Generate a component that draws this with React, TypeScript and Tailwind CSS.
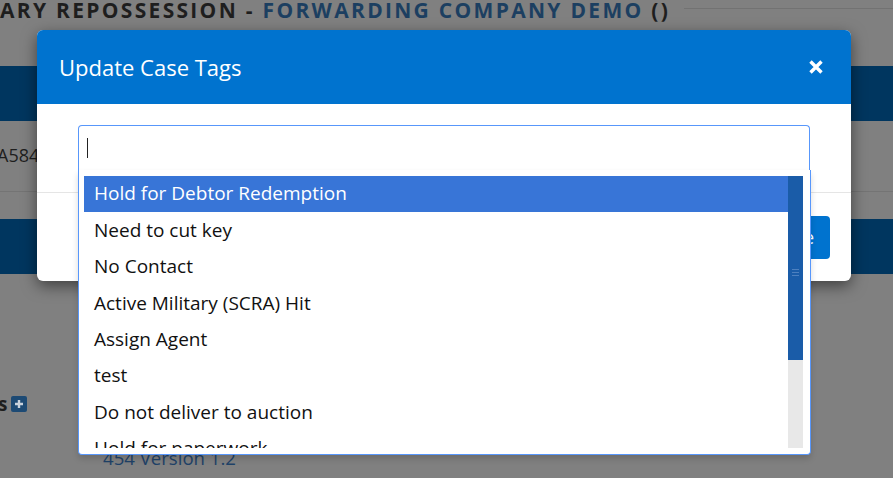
import React from "react";

const items = [
  "Hold for Debtor Redemption",
  "Need to cut key",
  "No Contact",
  "Active Military (SCRA) Hit",
  "Assign Agent",
  "test",
  "Do not deliver to auction",
  "Hold for paperwork",
  "Keys Received",
];

export default function App() {
  return (
    <div
      className="relative w-[893px] h-[478px] overflow-hidden bg-[#808080]"
      style={{ fontFamily: '"Open Sans", "Noto Sans", sans-serif' }}
    >
      {/* background page (dimmed) */}
      <div className="flex flex-col">
        <div className="h-[28px] flex items-start">
          <div className="mt-0 whitespace-nowrap text-[21px] leading-[21px] font-bold tracking-[2.3px] text-[#1e1e1e]">
            ARY REPOSSESSION - <span className="text-[#1c3f61]">FORWARDING COMPANY DEMO</span> ()
          </div>
          <div className="flex-1 mt-[8px] ml-[14px] border-t border-[#727272]" />
        </div>
        <div className="mt-[38px] h-[55px] bg-[#00365f]" />
        <div className="h-[71px] border-b border-[#747474] pt-[25px]">
          <div className="-ml-[3px] text-[18px] leading-[18px] text-[#1e1e1e]">A584</div>
        </div>
        <div className="mt-[27px] h-[55px] bg-[#00365f]" />
        <div className="mt-[122px] h-[16px] flex items-center">
          <span className="text-[19px] leading-[16px] font-bold text-[#1e1e1e] -ml-[2px]">s</span>
          <span className="ml-[4px] w-[16px] h-[16px] rounded-[2px] bg-[#1d4a74] flex items-center justify-center">
            <svg width="10" height="10" viewBox="0 0 10 10">
              <path d="M5 1v8M1 5h8" stroke="#c9d2dc" strokeWidth="2.4" />
            </svg>
          </span>
        </div>
        <div className="mt-[37px] pl-[103px] text-[18.6px] leading-[18px] text-[#1f4268]">454 Version 1.2</div>
      </div>

      {/* modal */}
      <div className="absolute left-[37px] top-[30px] w-[814px] rounded-[6px] overflow-hidden bg-white shadow-[0_5px_15px_rgba(0,0,0,0.5)]">
        <div className="h-[74px] bg-[#0073cf] flex items-center justify-between pl-[22px] pr-[28px]">
          <div className="text-[22px] leading-[22px] text-white">Update Case Tags</div>
          <svg width="14" height="14" viewBox="0 0 14 14">
            <path d="M1.5 1.5L12.5 12.5M12.5 1.5L1.5 12.5" stroke="#fff" strokeWidth="3.4" />
          </svg>
        </div>
        <div className="h-[88px] px-[41px] pt-[21px]">
          <div className="h-[45px] border border-b-0 border-[#5897fb] rounded-t-[4px] flex items-center pl-[8px]">
            <div className="w-[1px] h-[20px] bg-[#222]" />
          </div>
        </div>
        <div className="h-[89px] border-t border-[#e5e5e5] flex items-center justify-end pr-[21px]">
          <button className="h-[43px] px-[16px] rounded-[4px] bg-[#0073cf] text-white text-[18px]">Save</button>
        </div>
      </div>

      {/* dropdown */}
      <div className="absolute left-[78px] top-[170px] w-[733px] h-[285px] bg-white border border-t-0 border-[#5897fb] rounded-b-[4px] shadow-[0_4px_6px_rgba(0,0,0,0.15)] pl-[5px] pr-[7px] pt-[6px]">
        <div className="flex">
          <div className="w-[704px] h-[272px] overflow-hidden">
            {items.map((t, i) => (
              <div
                key={t}
                className={
                  i === 0
                    ? "h-[36.4px] flex items-center pl-[10px] pb-[1px] text-[19px] bg-[#3875d7] text-white whitespace-nowrap"
                    : "h-[36.4px] flex items-center pl-[10px] pb-[1px] text-[19px] text-[#111] whitespace-nowrap"
                }
              >
                {t}
              </div>
            ))}
          </div>
          <div className="w-[15px] h-[272px] bg-[#e8e8e8] flex flex-col">
            <div className="h-[184px] bg-[#1a5ca8] flex items-center justify-center">
              <div className="flex flex-col gap-[2px] mt-[8px]">
                <div className="w-[7px] h-[1px] bg-[#4d80bf]" />
                <div className="w-[7px] h-[1px] bg-[#4d80bf]" />
                <div className="w-[7px] h-[1px] bg-[#4d80bf]" />
              </div>
            </div>
          </div>
        </div>
      </div>
    </div>
  );
}
